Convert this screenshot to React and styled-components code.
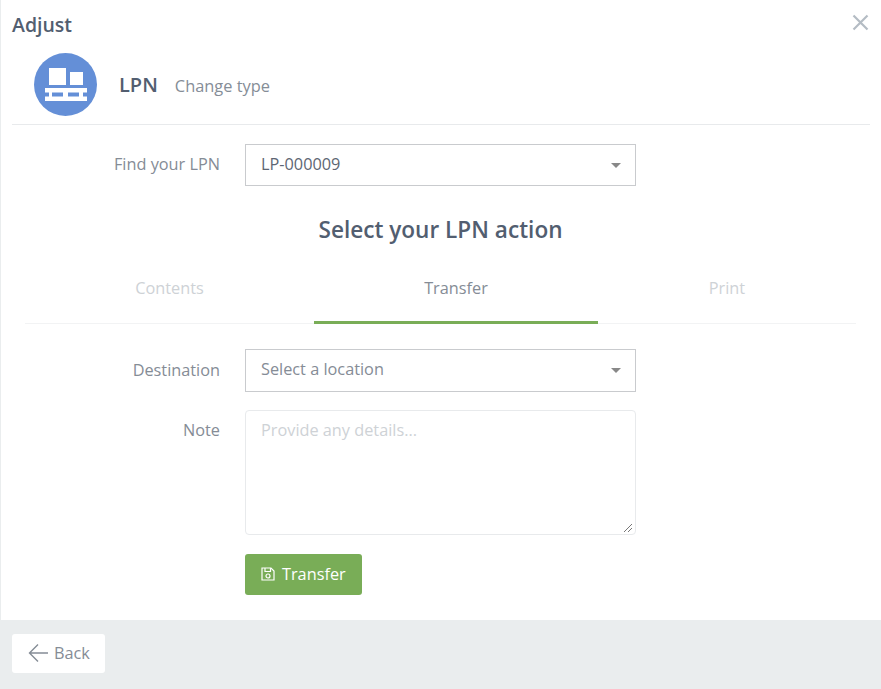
import React from "react";
import styled, { createGlobalStyle } from "styled-components";

const Global = createGlobalStyle`
  html, body { margin: 0; padding: 0; background: #fff; }
  body { font-family: "Open Sans", "Liberation Sans", sans-serif; }
  * { box-sizing: border-box; }
`;

const Page = styled.div`
  width: 881px;
  height: 689px;
  display: flex;
  flex-direction: column;
  background: #eaedee;
`;

const Sheet = styled.div`
  height: 620px;
  background: #fff;
  border-left: 1px solid #eaedee;
  padding: 0 11px;
  position: relative;
`;

const Title = styled.div`
  font-size: 19.5px;
  line-height: 24px;
  font-weight: 600;
  color: #525e70;
  padding-top: 13px;
`;

const CloseBtn = styled.svg`
  position: absolute;
  top: 14px;
  right: 12px;
  width: 17px;
  height: 17px;
`;

const Header = styled.div`
  display: flex;
  align-items: center;
  height: 88px;
  padding: 16px 0 9px 22px;
  border-bottom: 1px solid #e8eaec;
`;

const Badge = styled.svg`
  width: 63px;
  height: 63px;
  flex: none;
`;

const HeaderName = styled.span`
  font-size: 20px;
  font-weight: 600;
  color: #525e70;
  margin-left: 22px;
`;

const HeaderSub = styled.span`
  font-size: 16.4px;
  color: #858d97;
  margin-left: 17px;
  position: relative;
  top: 1px;
`;

const Row = styled.div`
  display: flex;
  align-items: ${(p) => (p.$top ? "flex-start" : "center")};
  margin-top: ${(p) => p.$mt || 0}px;
`;

const Label = styled.div`
  width: 208px;
  text-align: right;
  font-size: 16.3px;
  line-height: 22px;
  color: #858c96;
  padding-top: ${(p) => (p.$top ? 9 : 0)}px;
  padding-bottom: ${(p) => (p.$top ? 0 : 2)}px;
`;

const Select = styled.div`
  width: 391px;
  height: ${(p) => (p.$tall ? 43 : 42)}px;
  margin-left: 25px;
  border: 1px solid #c9cbce;
  display: flex;
  align-items: center;
  justify-content: space-between;
  padding: 0 14px ${(p) => (p.$tall ? 3 : 2)}px 15px;
  font-size: 16.3px;
  color: ${(p) => (p.$placeholder ? "#858c96" : "#5d6673")};
`;

const Caret = styled.span`
  width: 0;
  height: 0;
  margin-top: 2px;
  border-left: 5px solid transparent;
  border-right: 5px solid transparent;
  border-top: 5px solid #888;
`;

const Heading = styled.div`
  text-align: center;
  font-size: 22.6px;
  line-height: 32px;
  font-weight: 600;
  color: #525e70;
  margin-top: 28px;
  padding-right: 1px;
`;

const Tabs = styled.div`
  display: grid;
  grid-template-columns: 289px 284px 258px;
  margin: 16px 14px 0 13px;
  border-bottom: 1px solid #f2f3f4;
  height: 62px;
`;

const Tab = styled.div`
  height: 62px;
  padding-top: 15px;
  text-align: center;
  font-size: 16.3px;
  line-height: 22px;
  color: ${(p) => (p.$active ? "#858c96" : "#ced2d6")};
  border-bottom: 3px solid ${(p) => (p.$active ? "#79ad57" : "transparent")};
`;

const Textarea = styled.div`
  width: 391px;
  height: 125px;
  margin-left: 25px;
  border: 1px solid #e8eaec;
  border-radius: 4px;
  padding: 8px 15px;
  font-size: 16.3px;
  line-height: 22px;
  color: #ced2d6;
  position: relative;
`;

const Grip = styled.svg`
  position: absolute;
  right: 2px;
  bottom: 1px;
  width: 10px;
  height: 10px;
`;

const Actions = styled.div`
  padding-left: 233px;
  margin-top: 19px;
`;

const SaveButton = styled.div`
  display: inline-flex;
  align-items: center;
  width: 117px;
  height: 41px;
  padding: 0 0 2px 16px;
  gap: 7px;
  background: #79ad57;
  border-radius: 3px;
  color: #fff;
  font-size: 16.3px;
`;

const Footer = styled.div`
  height: 69px;
  padding: 14px 12px;
`;

const BackButton = styled.div`
  display: inline-flex;
  align-items: center;
  width: 93px;
  height: 39px;
  padding: 0 0 2px 16px;
  gap: 5px;
  background: #fff;
  border-radius: 3px;
  color: #858c96;
  font-size: 16.3px;
`;

export default function App() {
  return (
    <Page>
      <Global />
      <Sheet>
        <Title>Adjust</Title>
        <CloseBtn viewBox="0 0 17 17">
          <path d="M1.5 1.5L15.5 15.5M15.5 1.5L1.5 15.5" stroke="#b4bcc4" strokeWidth="2.2" fill="none" />
        </CloseBtn>
        <Header>
          <Badge viewBox="0 0 63 63">
            <circle cx="31.5" cy="31.5" r="31.5" fill="#648fd7" />
            <g fill="#fff">
              <rect x="15" y="15" width="17" height="17" />
              <rect x="36" y="19" width="13" height="13" />
              <path d="M11 35H53V39.5H49V43.5H53V48H11V43.5H15V39.5H11Z" />
            </g>
            <rect x="18" y="39.5" width="11" height="4" fill="#648fd7" />
            <rect x="34" y="39.5" width="11" height="4" fill="#648fd7" />
          </Badge>
          <HeaderName>LPN</HeaderName>
          <HeaderSub>Change type</HeaderSub>
        </Header>
        <Row $mt={19}>
          <Label>Find your LPN</Label>
          <Select>
            LP-000009
            <Caret />
          </Select>
        </Row>
        <Heading>Select your LPN action</Heading>
        <Tabs>
          <Tab>Contents</Tab>
          <Tab $active>Transfer</Tab>
          <Tab>Print</Tab>
        </Tabs>
        <Row $mt={25}>
          <Label>Destination</Label>
          <Select $placeholder $tall>
            Select a location
            <Caret />
          </Select>
        </Row>
        <Row $top $mt={18}>
          <Label $top>Note</Label>
          <Textarea>
            Provide any details...
            <Grip viewBox="0 0 10 10">
              <path d="M1 9L9 1M5 9L9 5" stroke="#777" strokeWidth="1" fill="none" />
            </Grip>
          </Textarea>
        </Row>
        <Actions>
          <SaveButton>
            <svg width="14" height="14" viewBox="0 0 14 14" fill="none" stroke="#fff" strokeWidth="1.2">
              <path d="M1 1H10L13 4V13H1Z" />
              <path d="M4 1V4.5H9.5V1" />
              <circle cx="7" cy="9" r="2" />
            </svg>
            Transfer
          </SaveButton>
        </Actions>
      </Sheet>
      <Footer>
        <BackButton>
          <svg width="21" height="20" viewBox="0 0 21 20" fill="none" stroke="#858c96" strokeWidth="1.4">
            <path d="M20 10H1.5M10 1.5L1.5 10L10 18.5" />
          </svg>
          Back
        </BackButton>
      </Footer>
    </Page>
  );
}
